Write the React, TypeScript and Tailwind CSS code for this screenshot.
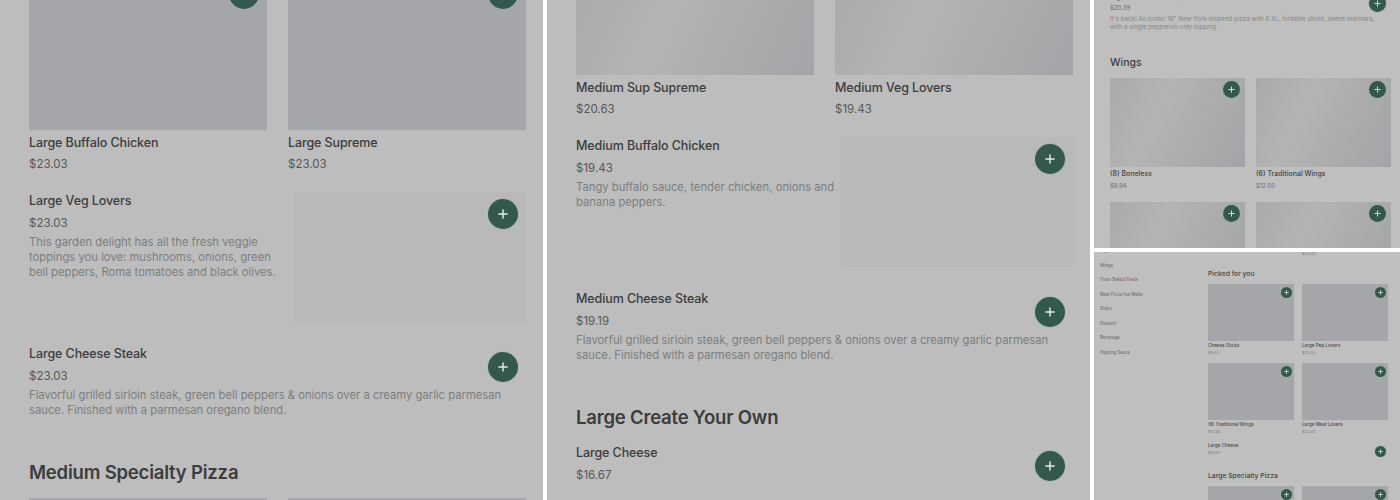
import { Plus } from "lucide-react";

const sizes = {
  lg: {
    title: "mt-[4px] text-[12.5px] leading-[18px] font-medium text-[#3b3c3c] tracking-[-0.1px]",
    rowTitle: "text-[12.5px] leading-[18px] font-medium text-[#3b3c3c] tracking-[-0.1px]",
    price: "mt-[2px] text-[11.5px] leading-[20px] text-[#565757]",
    rowPrice: "mt-[3px] text-[11.5px] leading-[20px] text-[#565757]",
    desc: "mt-[1.5px] text-[11.25px] leading-[15px] text-[#7c7d7d]",
    heading: "text-[18.5px] leading-[28px] font-semibold text-[#3b3c3c] tracking-[-0.2px]",
    button: "top-[7px] right-[8px] w-[30px] h-[30px]",
    icon: 14,
    cols: "grid-cols-[238px_238px] gap-x-[21px]",
  },
  md: {
    title: "mt-[2px] text-[7px] leading-[10px] font-medium text-[#454646]",
    rowTitle: "text-[7px] leading-[10px] font-medium text-[#454646]",
    price: "mt-[1.5px] text-[6px] leading-[11px] text-[#6a6b6b]",
    rowPrice: "mt-[0px] text-[6px] leading-[11px] text-[#6a6b6b]",
    desc: "mt-[1.75px] text-[6.2px] leading-[8.5px] text-[#858686]",
    heading: "text-[10.5px] leading-[16px] font-medium text-[#3f4040]",
    button: "top-[3px] right-[5.5px] w-[17px] h-[17px]",
    icon: 9,
    cols: "grid-cols-[135px_135px] gap-x-[11px]",
  },
  sm: {
    title: "mt-[2px] text-[4.6px] leading-[6px] font-medium text-[#4a4b4b]",
    rowTitle: "text-[4.6px] leading-[6px] font-medium text-[#4a4b4b]",
    price: "mt-[1px] text-[4px] leading-[6px] text-[#7a7b7b]",
    rowPrice: "mt-[1px] text-[4px] leading-[6px] text-[#7a7b7b]",
    desc: "text-[4px] leading-[6px] text-[#858686]",
    heading: "text-[6.8px] leading-[10px] font-medium text-[#434444]",
    button: "top-[2.5px] right-[2.5px] w-[11px] h-[11px]",
    icon: 7,
    cols: "grid-cols-[86px_86px] gap-x-[8px]",
  },
};

type Size = keyof typeof sizes;

const flatImage = "bg-[#a4a6a9]";
const sheenImage =
  "bg-[linear-gradient(115deg,#a9aaab_0%,#b4b4b4_35%,#acacac_65%,#a2a4a8_100%)]";

function AddButton({ size }: { size: Size }) {
  return (
    <div
      className={`absolute ${sizes[size].button} rounded-full bg-[#33584d] ring-1 ring-[#9fb5ad]/50 flex items-center justify-center`}
    >
      <Plus size={sizes[size].icon} strokeWidth={2.5} color="#e4ebe8" />
    </div>
  );
}

function GridCard({
  size,
  name,
  price,
  image,
  imageClass = flatImage,
  button = true,
}: {
  size: Size;
  name: string;
  price: string;
  image: string;
  imageClass?: string;
  button?: boolean;
}) {
  const s = sizes[size];
  return (
    <div>
      <div className={`relative ${image} ${imageClass}`}>
        {button && <AddButton size={size} />}
      </div>
      <div className={s.title}>{name}</div>
      <div className={s.price}>{price}</div>
    </div>
  );
}

function RowItem({
  size,
  name,
  price,
  desc,
  placeholder,
  className = "",
}: {
  size: Size;
  name: string;
  price: string;
  desc?: React.ReactNode;
  placeholder?: string;
  className?: string;
}) {
  const s = sizes[size];
  return (
    <div className={`relative flex justify-between ${className}`}>
      <div>
        <div className={s.rowTitle}>{name}</div>
        <div className={s.rowPrice}>{price}</div>
        {desc && <div className={s.desc}>{desc}</div>}
      </div>
      {placeholder && <div className={`h-[130px] shrink-0 bg-[#b9b9b9] ${placeholder}`} />}
      <AddButton size={size} />
    </div>
  );
}

const steakDesc = (
  <>
    Flavorful grilled sirloin steak, green bell peppers &amp; onions over a creamy garlic parmesan
    <br />
    sauce. Finished with a parmesan oregano blend.
  </>
);

function LargePanel() {
  const s = sizes.lg;
  return (
    <div className="w-[543px] h-[500px] overflow-hidden bg-[#bdbdbd] pl-[29px] pr-[17px]">
      <div className={`grid ${s.cols}`}>
        <div>
          <div className="relative h-[130px] bg-[#a4a6a9]">
            <div className="absolute -top-[21px] right-[8px] w-[30px] h-[30px] rounded-full bg-[#33584d] ring-1 ring-[#9fb5ad]/50" />
          </div>
          <div className={s.title}>Large Buffalo Chicken</div>
          <div className={s.price}>$23.03</div>
        </div>
        <div>
          <div className="relative h-[130px] bg-[#a4a6a9]">
            <div className="absolute -top-[21px] right-[8px] w-[30px] h-[30px] rounded-full bg-[#33584d] ring-1 ring-[#9fb5ad]/50" />
          </div>
          <div className={s.title}>Large Supreme</div>
          <div className={s.price}>$23.03</div>
        </div>
      </div>
      <RowItem
        size="lg"
        className="mt-[18px]"
        name="Large Veg Lovers"
        price="$23.03"
        placeholder="w-[233px]"
        desc={
          <>
            This garden delight has all the fresh veggie
            <br />
            toppings you love: mushrooms, onions, green
            <br />
            bell peppers, Roma tomatoes and black olives.
          </>
        }
      />
      <RowItem
        size="lg"
        className="mt-[23px]"
        name="Large Cheese Steak"
        price="$23.03"
        desc={steakDesc}
      />
      <div className={`mt-[40.5px] mb-[12px] ${s.heading}`}>Medium Specialty Pizza</div>
      <div className={`grid ${s.cols}`}>
        <div className="h-[130px] bg-[#a4a6a9]" />
        <div className="h-[130px] bg-[#a4a6a9]" />
      </div>
    </div>
  );
}

function MediumPanel() {
  const s = sizes.lg;
  return (
    <div className="w-[543px] h-[500px] overflow-hidden bg-[#bdbdbd] pl-[29px] pr-[17px]">
      <div className={`grid ${s.cols}`}>
        <GridCard size="lg" name="Medium Sup Supreme" price="$20.63" image="h-[75px]" imageClass={sheenImage} button={false} />
        <GridCard size="lg" name="Medium Veg Lovers" price="$19.43" image="h-[75px]" imageClass={sheenImage} button={false} />
      </div>
      <RowItem
        size="lg"
        className="mt-[18px]"
        name="Medium Buffalo Chicken"
        price="$19.43"
        placeholder="w-[232px]"
        desc={
          <>
            Tangy buffalo sauce, tender chicken, onions and
            <br />
            banana peppers.
          </>
        }
      />
      <RowItem
        size="lg"
        className="mt-[23px]"
        name="Medium Cheese Steak"
        price="$19.19"
        desc={steakDesc}
      />
      <div className={`mt-[40.5px] mb-[13px] ${s.heading}`}>Large Create Your Own</div>
      <RowItem size="lg" name="Large Cheese" price="$16.67" />
    </div>
  );
}

function WingsPanel() {
  const s = sizes.md;
  return (
    <div className="h-[248px] overflow-hidden bg-[#bfbfbf] pl-[16px] pr-[9px]">
      <RowItem
        size="md"
        className="-mt-[8px]"
        name="Big New Yorker Pepperoni"
        price="$20.39"
        desc={
          <>
            It's back! An iconic 16" New York-inspired pizza with 6 XL, foldable slices, sweet marinara,
            <br />
            with a single pepperoni only topping.
          </>
        }
      />
      <div className={`mt-[22.75px] mb-[7px] ${s.heading}`}>Wings</div>
      <div className={`grid ${s.cols} gap-y-[10.5px]`}>
        <GridCard size="md" name="(8) Boneless" price="$9.94" image="h-[89px]" imageClass={sheenImage} />
        <GridCard size="md" name="(6) Traditional Wings" price="$12.00" image="h-[89px]" imageClass={sheenImage} />
        <GridCard size="md" name="(8) Traditional Wings" price="$15.00" image="h-[89px]" imageClass={sheenImage} />
        <GridCard size="md" name="(12) Boneless" price="$14.50" image="h-[89px]" imageClass={sheenImage} />
      </div>
    </div>
  );
}

const categories = [
  "Big New Yorker",
  "Wings",
  "Oven Baked Pasta",
  "New Pizza Hut Melts",
  "Sides",
  "Dessert",
  "Beverage",
  "Dipping Sauce",
];

function OverviewPanel() {
  const s = sizes.sm;
  return (
    <div className="flex-1 min-h-0 overflow-hidden bg-[#bfbfbf] flex pl-[6px] pr-[12px]">
      <nav className="w-[108px] shrink-0 -mt-[8px]">
        {categories.map((name) => (
          <div key={name} className="text-[4.4px] leading-[14.5px] text-[#606161]">
            {name}
          </div>
        ))}
      </nav>
      <div className="flex-1">
        <div className={`-mt-[1px] grid ${s.cols}`}>
          <div />
          <div className="text-[4px] leading-[6px] text-[#7a7b7b]">$23.03</div>
        </div>
        <div className={`mt-[12px] mb-[5px] ${s.heading}`}>Picked for you</div>
        <div className={`grid ${s.cols} gap-y-[7px]`}>
          <GridCard size="sm" name="Cheese Sticks" price="$9.43" image="h-[57px]" />
          <GridCard size="sm" name="Large Pep Lovers" price="$23.03" image="h-[57px]" />
          <GridCard size="sm" name="(6) Traditional Wings" price="$12.00" image="h-[57px]" />
          <GridCard size="sm" name="Large Meat Lovers" price="$23.03" image="h-[57px]" />
        </div>
        <RowItem size="sm" className="mt-[8px]" name="Large Cheese" price="$16.67" />
        <div className={`mt-[15px] mb-[5px] ${s.heading}`}>Large Specialty Pizza</div>
        <div className={`grid ${s.cols}`}>
          <GridCard size="sm" name="Large Pepperoni" price="$23.03" image="h-[57px]" />
          <GridCard size="sm" name="Large Supreme" price="$23.03" image="h-[57px]" />
        </div>
      </div>
    </div>
  );
}

export default function App() {
  return (
    <div className="w-[1400px] h-[500px] overflow-hidden bg-white flex gap-[4px] font-['Inter',sans-serif]">
      <LargePanel />
      <MediumPanel />
      <div className="flex-1 flex flex-col gap-[4px]">
        <WingsPanel />
        <OverviewPanel />
      </div>
    </div>
  );
}
